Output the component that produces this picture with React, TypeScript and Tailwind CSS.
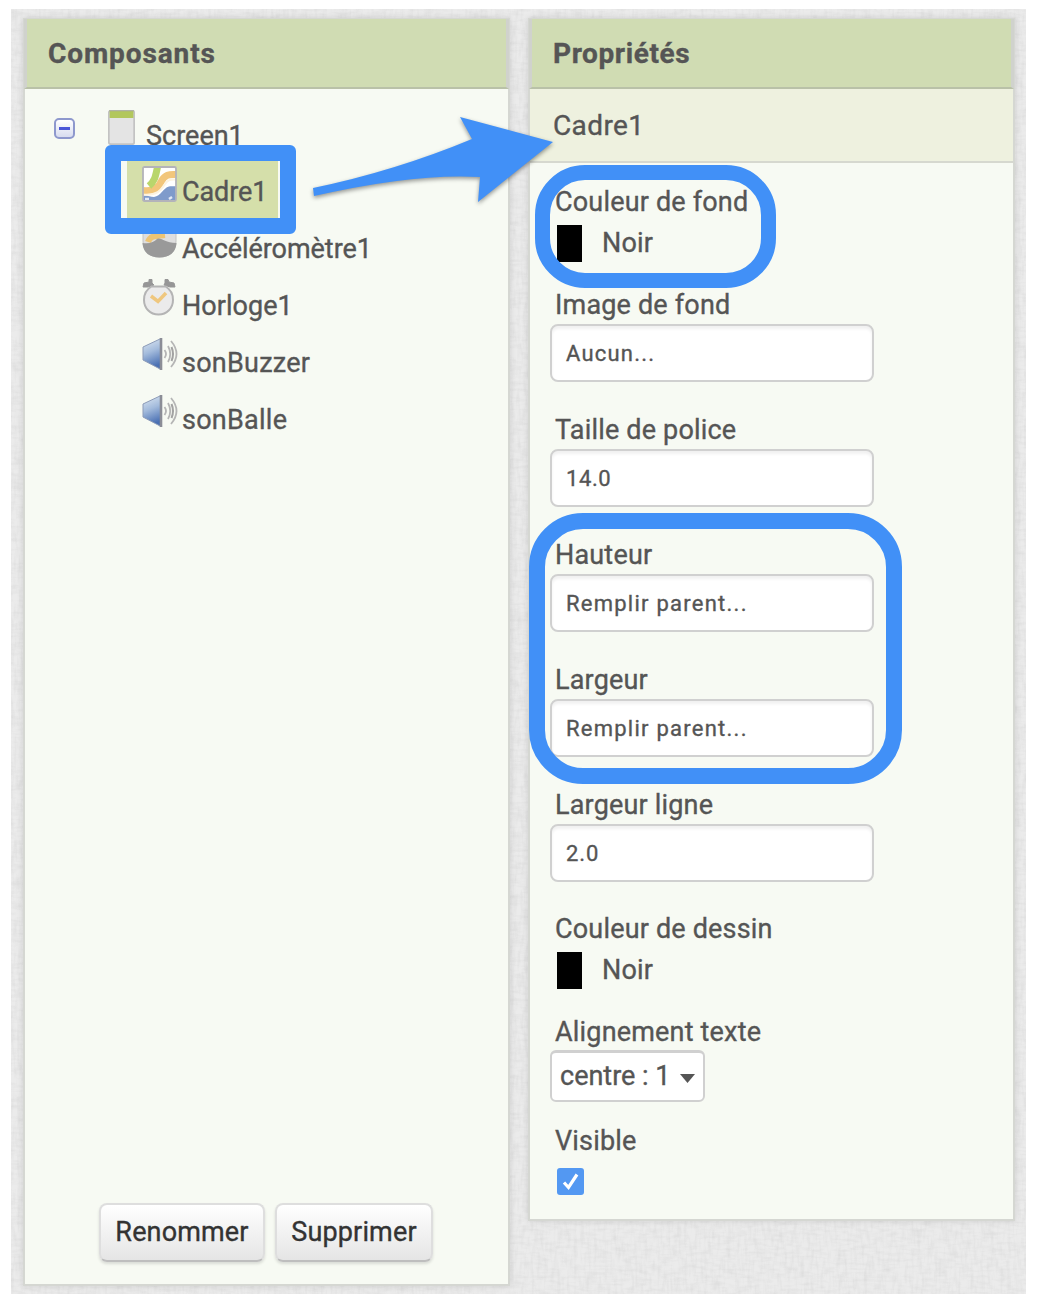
import React from "react";

function Linen() {
  return (
    <svg className="absolute inset-0 h-full w-full" aria-hidden="true">
      <filter id="weave-h" x="0" y="0" width="100%" height="100%">
        <feTurbulence type="fractalNoise" baseFrequency="0.08 0.3" numOctaves="2" seed="3" />
        <feColorMatrix values="0 0 0 0 0.5  0 0 0 0 0.5  0 0 0 0 0.5  0.9 0 0 0 -0.38" />
      </filter>
      <filter id="weave-v" x="0" y="0" width="100%" height="100%">
        <feTurbulence type="fractalNoise" baseFrequency="0.3 0.06" numOctaves="2" seed="8" />
        <feColorMatrix values="0 0 0 0 0.5  0 0 0 0 0.5  0 0 0 0 0.5  0.9 0 0 0 -0.38" />
      </filter>
      <rect width="100%" height="100%" filter="url(#weave-h)" opacity="0.42" />
      <rect width="100%" height="100%" filter="url(#weave-v)" opacity="0.42" />
    </svg>
  );
}

function ScreenIcon() {
  return (
    <svg className="h-[35px] w-[27px]" viewBox="0 0 27 35">
      <rect x="0.8" y="0.8" width="25.4" height="33.4" rx="2" fill="#e4e4e4" stroke="#c3c3c3" strokeWidth="1.8" />
      <rect x="1.6" y="1" width="23.8" height="7" fill="#b2c75c" />
      <path d="M1 .8h25" stroke="#a9ad98" />
    </svg>
  );
}

function CanvasIcon() {
  return (
    <svg className="mt-px h-9 w-[35px]" viewBox="0 0 35 36">
      <rect x="1" y="1" width="33" height="34" rx="1" fill="#fff" />
      <path d="M1 29.500C6 29 8 31 12 31C19 30 21 22 27 20.500C30 19.500 32 21 34 20V35H1z" fill="#7f9bcb" />
      <path d="M1 24.500C14 26 17 20 19.500 15C23 9 27 8 34 8.500" fill="none" stroke="#f2c67b" strokeWidth="7" />
      <path d="M1 28.500C17 30 20 22 23 18C26 14 28 13 34 13.500" fill="none" stroke="#fdf3df" strokeWidth="2" />
      <path d="M15.500 1C13.500 10 13 15 7 20" fill="none" stroke="#b9d66c" strokeWidth="7" />
      <path d="M3 33h4M27 33l3-2" stroke="#e2e9f5" strokeWidth="2.500" />
      <rect x="1" y="1" width="33" height="34" rx="1.5" fill="none" stroke="#b3b3ba" strokeWidth="1.8" />
    </svg>
  );
}

function AccelerometerIcon() {
  return (
    <svg className="h-[35px] w-[35px]" viewBox="0 0 35 35">
      <path d="M1 3Q1 1 3 1H32Q34 1 34 3V18C34 28 28 34 17.5 34S1 28 1 18z" fill="#dedede" stroke="#c4c4c4" />
      <path d="M6 19C8 13 12 13 23 12" fill="none" stroke="#edc474" strokeWidth="6" />
      <path d="M.5 20C8 21 12 19 15 16C20 14 22 20 34.5 20C34 29 28 34.500 17.500 34.500S1 29 .5 20z" fill="#999" />
    </svg>
  );
}

function ClockIcon() {
  return (
    <svg className="h-[38px] w-[34px]" viewBox="0 0 34 38">
      <path d="M1 9L2 5L7 4V1.500H10V5L12 7L6 9zM33 9L32 5L27 4L26 1.500H23V5L22 7L28 9z" fill="#969696" stroke="#969696" strokeLinejoin="round" />
      <path d="M9.500 8.500H23.500C28 11 31 16 31 22C31 30 25 36.500 16.500 36.500S2 30 2 22C2 16 5 11 9.500 8.500z" fill="#ebebeb" stroke="#b4b4b4" strokeWidth="2" />
      <path d="M9 18L16 23.500L24 15" fill="none" stroke="#efc77e" strokeWidth="3.500" />
    </svg>
  );
}

function SpeakerIcon() {
  return (
    <svg className="h-[34px] w-9" viewBox="0 0 36 34">
      <defs>
        <linearGradient id="cone" x1="0" y1="0" x2="0.25" y2="1">
          <stop offset="0.1" stopColor="#d5e1ef" />
          <stop offset="0.5" stopColor="#a3bbdc" />
          <stop offset="1" stopColor="#4a70b3" />
        </linearGradient>
      </defs>
      <path d="M1 10L19 1.500V32.500L1 23z" fill="url(#cone)" stroke="#8c9bb8" />
      <path d="M19 1v32" stroke="#8b8d96" strokeWidth="2.600" />
      <path d="M22.500 13Q25.500 17 22.500 21M26 9Q30.500 17 26 25M29 4Q40 17 29 30" fill="none" stroke="#b5b5b5" strokeWidth="1.800" />
      <path d="M29.500 10Q32.500 17 29.500 24" fill="none" stroke="#a2a2a2" strokeWidth="2" />
    </svg>
  );
}

const nodes = [
  { name: "Cadre1", icon: <CanvasIcon />, tracking: "tracking-[-0.1px]", selected: true },
  { name: "Accéléromètre1", icon: <AccelerometerIcon />, tracking: "tracking-[-0.05px]" },
  { name: "Horloge1", icon: <ClockIcon />, tracking: "tracking-[0.05px]" },
  { name: "sonBuzzer", icon: <SpeakerIcon />, tracking: "tracking-[0.25px]" },
  { name: "sonBalle", icon: <SpeakerIcon />, tracking: "tracking-[0.25px]" },
];

function Header({ children, tracking }: { children: React.ReactNode; tracking: string }) {
  return (
    <h2 className={`${tracking} h-[70px] border-x-[3px] border-b-2 border-x-[#d0d2cd] border-b-[#b9c1a8] bg-[#d0dcb3] pl-[21px] text-[28px] leading-[69px] font-bold`}>
      {children}
    </h2>
  );
}

function Label({ children }: { children: React.ReactNode }) {
  return <div className="ml-[5px] h-8 text-[27px] leading-8 tracking-[0.18px] whitespace-nowrap">{children}</div>;
}

function Field({ label, value, tracking }: { label: string; value: string; tracking: string }) {
  return (
    <div className="mb-[33px]">
      <Label>{label}</Label>
      <div
        className={`${tracking} mt-[3px] -mb-[0.500px] h-[57.500px] w-[324px] rounded-lg border-2 border-[#d0d0d0] bg-white pl-[14px] text-[22px] leading-[55px] shadow-[inset_0_3px_3px_rgba(0,0,0,0.06)]`}
      >
        {value}
      </div>
    </div>
  );
}

function ColorField({ label }: { label: string }) {
  return (
    <div className="mb-[27px]">
      <Label>{label}</Label>
      <div className="mt-[7px] ml-[7px] flex h-[37px] items-center gap-[20px] text-[27px] tracking-[0.15px]">
        <span className="h-[37px] w-[25px] bg-black" />
        <span>Noir</span>
      </div>
    </div>
  );
}

function Button({ children, width }: { children: React.ReactNode; width: string }) {
  return (
    <button className={`${width} h-[59px] rounded-lg border-2 border-[#dedede] border-b-[#bebebe] bg-linear-to-b from-white to-[#e5e5e5] text-center text-[27px] tracking-[0.15px] text-[#333] shadow-[0_2px_3px_rgba(0,0,0,0.12)]`}>
      {children}
    </button>
  );
}

export default function App() {
  return (
    <main className="relative h-[1302px] w-[1046px] overflow-hidden bg-white pt-[9px] pl-[11px] font-['Roboto',sans-serif] text-[#555] [-webkit-text-stroke:0.35px]">
      <div className="relative h-[1285px] w-[1015px] bg-[#ebebeb]">
        <Linen />
        <div className="relative flex items-start gap-[19px] pt-[9px] pl-3">
          <section className="flex h-[1268px] w-[487px] flex-col border-2 border-[#d5d7d2] bg-[#f7faf3] shadow-[0_0_6px_rgba(0,0,0,0.12)]">
            <div className="-mx-px -mt-px">
              <Header tracking="tracking-[0.9px]">Composants</Header>
            </div>
            <div className="flex pt-[21px] pl-[29px]">
              <div className="mt-2 flex h-[21px] w-[21px] items-center justify-center rounded-[5px] border-2 border-[#8e98cd] bg-linear-to-b from-white to-[#d8dcef]">
                <span className="h-[3px] w-[11px] bg-[#4a55d8]" />
              </div>
              <div className="ml-[33px] flex h-[51px] gap-[11px]">
                <ScreenIcon />
                <span className="mt-[10px] text-[27px] leading-8">Screen1</span>
              </div>
            </div>
            <ul className="pl-[102px]">
              {nodes.map((n) => (
                <li
                  key={n.name}
                  className={`flex h-[57px] items-start pt-[4px] pl-[15px] ${n.selected ? "w-[151px] bg-[#d5dfaa]" : "w-[300px]"}`}
                >
                  <span className="flex h-9 w-[40px] shrink-0 items-center">{n.icon}</span>
                  <span className={`mt-[11px] text-[27px] leading-8 ${n.tracking}`}>{n.name}</span>
                </li>
              ))}
            </ul>
            <div className="mt-auto mb-[22px] ml-[74px] flex gap-[10px]">
              <Button width="w-[166px]">Renommer</Button>
              <Button width="w-[158px]">Supprimer</Button>
            </div>
          </section>

          <section className="-ml-px h-[1203px] w-[487px] border-2 border-[#d5d7d2] bg-[#f7faf3] shadow-[0_0_6px_rgba(0,0,0,0.12)]">
            <div className="-mx-px -mt-px">
              <Header tracking="tracking-[0.6px]">Propriétés</Header>
            </div>
            <div className="h-[74px] border-b-2 border-[#d6d8cf] bg-[#eef1df] pl-[23px] text-[28px] leading-[73px] tracking-[0.4px]">Cadre1</div>
            <div className="pt-[23px] pl-5">
              <ColorField label="Couleur de fond" />
              <Field label="Image de fond" value="Aucun..." tracking="tracking-[1.2px]" />
              <Field label="Taille de police" value="14.0" tracking="tracking-[0.6px]" />
              <Field label="Hauteur" value="Remplir parent..." tracking="tracking-[1.25px]" />
              <Field label="Largeur" value="Remplir parent..." tracking="tracking-[1.25px]" />
              <Field label="Largeur ligne" value="2.0" tracking="tracking-[0.9px]" />
              <div className="-mt-[2px]">
                <ColorField label="Couleur de dessin" />
              </div>
              <Label>Alignement texte</Label>
              <div className="mt-[2px] mb-[23px] flex h-[52px] w-[155px] items-center justify-between rounded-md border-2 border-t-[3px] border-[#d0d0d0] bg-white pr-2 pl-2 text-[27px]">
                <span>centre : 1</span>
                <svg className="mt-1 h-[9px] w-[15px]" viewBox="0 0 15 9">
                  <path d="M0 0h15L7.500 9z" fill="#555" />
                </svg>
              </div>
              <Label>Visible</Label>
              <div className="mt-[11px] ml-[7px] flex h-[27px] w-[27px] items-center justify-center rounded-[3px] bg-[#5398f2]">
                <svg className="h-[19px] w-[17px]" viewBox="0 0 17 19">
                  <path d="M2 10.500L6.500 15.500L15 2.500" fill="none" stroke="#fff" strokeWidth="3.200" />
                </svg>
              </div>
            </div>
          </section>
        </div>
      </div>

      {/* annotations over the two panels */}
      <div className="absolute top-[145px] left-[105px] h-[89px] w-[191px] rounded-md border-[16px] border-[#4190f7]" />
      <div className="absolute top-[165px] left-[535px] h-[123px] w-[241px] rounded-[50px] border-[15.500px] border-[#4190f7]" />
      <div className="absolute top-[513px] left-[529px] h-[271px] w-[373px] rounded-[54px] border-[16.500px] border-[#4190f7]" />
      <svg className="absolute top-[100px] left-[300px] h-[120px] w-[260px] drop-shadow-[0_2px_2px_rgba(0,0,0,0.4)]" viewBox="300 100 260 120">
        <path d="M313 188Q395 171 472 139L460 117L553 142L478 202L480 177Q415 173 314 196z" fill="#4190f7" />
      </svg>
    </main>
  );
}
